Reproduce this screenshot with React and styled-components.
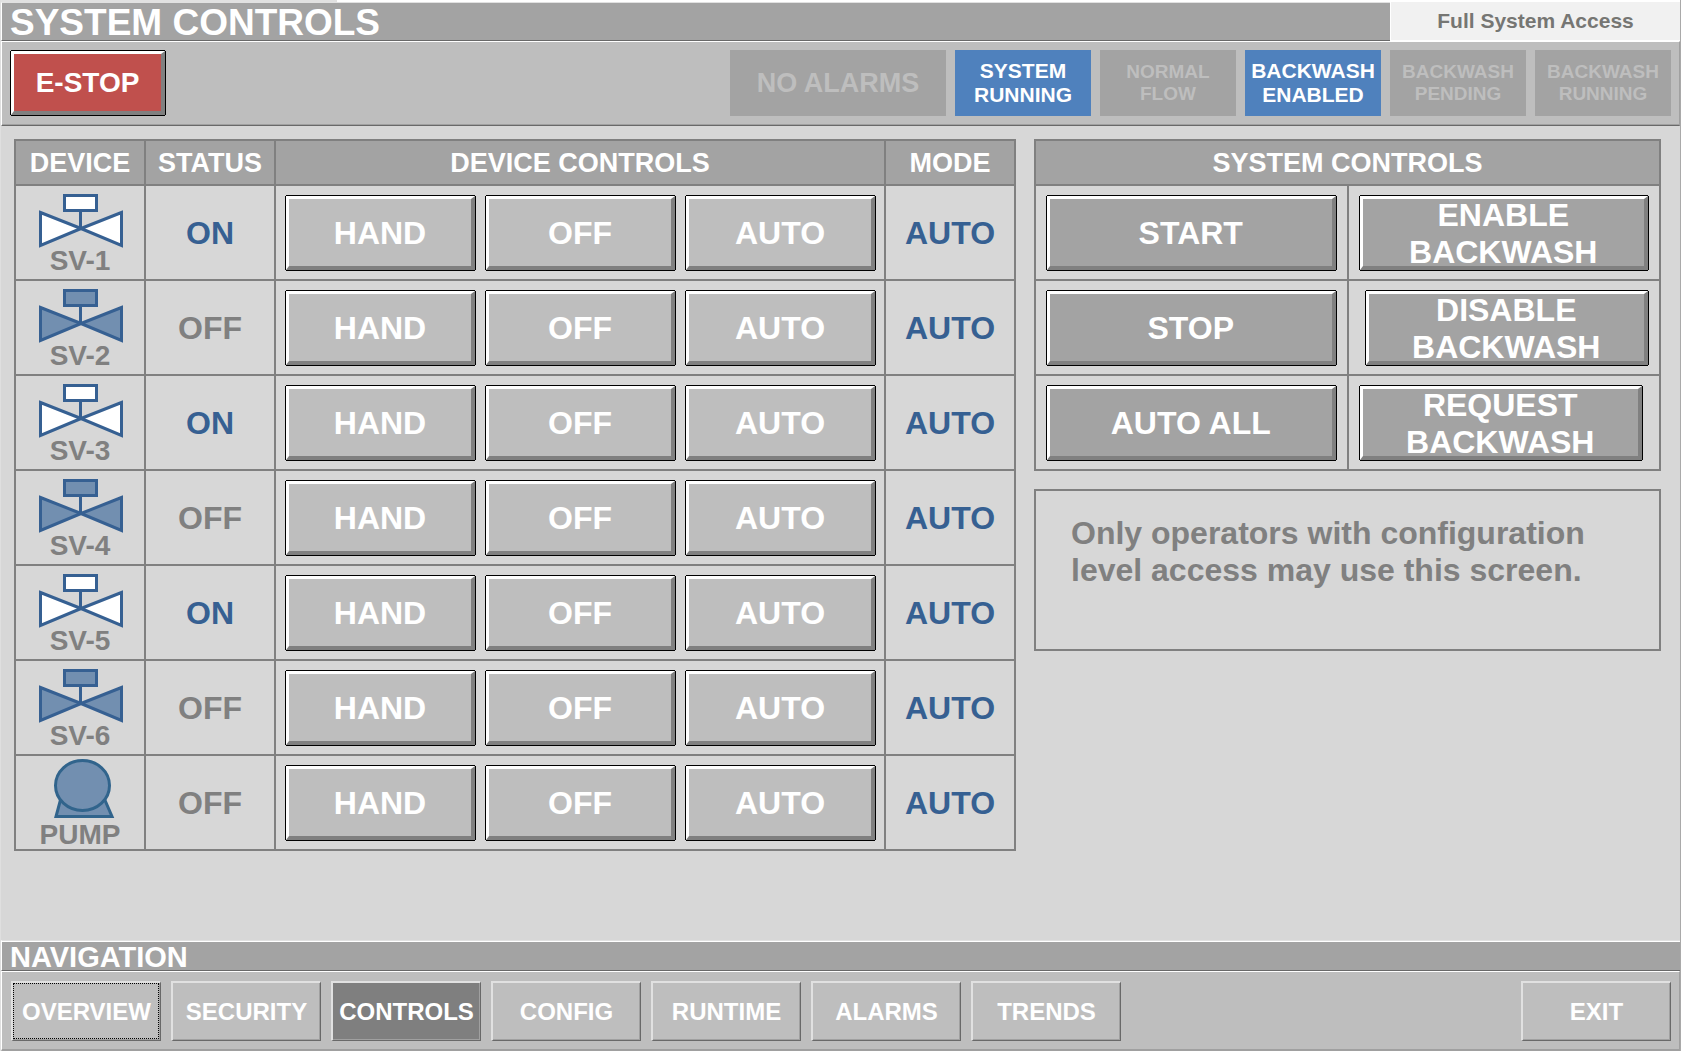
import React from 'react';
import styled, { createGlobalStyle } from 'styled-components';

const color = {
  page: '#d7d7d7',
  bar: '#bebebe',
  heading: '#a3a3a3',
  line: '#808080',
  muted: '#808080',
  shade: '#696969',
  light: '#e1e1e1',
  blueText: '#366092',
  badge: '#4f81bd',
  stop: '#c0504d',
};

const GlobalStyle = createGlobalStyle`
  *, *::before, *::after { box-sizing: border-box; }
  body {
    margin: 0;
    background: ${color.page};
    font-family: "Liberation Sans", Arial, sans-serif;
    font-weight: bold;
  }
  button { font: inherit; cursor: pointer; }
`;

const Page = styled.div`
  display: flex;
  flex-direction: column;
  min-height: 100vh;
  border-left: 1px solid #dfdfdf;
  border-right: 1px solid #a9a9a9;
`;

const TopEdge = styled.div`
  height: 2px;
  background: linear-gradient(to right, ${color.light} 20%, #fff 20%);
`;

const TitleRow = styled.header`
  display: flex;
  height: 39px;
`;

const TitleBar = styled.div`
  flex: 1;
  display: flex;
  align-items: center;
  padding: 2px 0 0 8px;
  background: ${color.heading};
  border-top: 1px solid ${color.light};
  border-left: 1px solid #fff;
  border-bottom: 1px solid ${color.shade};
`;

const Title = styled.h1`
  margin: 0;
  font-size: 37px;
  line-height: 37px;
  color: #fff;
`;

const Access = styled.div`
  flex: 0 0 290px;
  display: flex;
  align-items: center;
  justify-content: center;
  background: #f1f1f1;
  border-left: 1px solid #fff;
  border-bottom: 1px solid #fff;
  color: #767673;
  font-size: 21px;
  line-height: 24px;
`;

const StatusBar = styled.section`
  display: flex;
  justify-content: space-between;
  padding: 8px;
  background: ${color.bar};
  border: 1px solid #fff;
  border-right-color: #a0a0a0;
  border-bottom-color: ${color.shade};
  box-shadow: inset 0 -1px #a0a0a0;
  height: 85px;
`;

const BadgeList = styled.ul`
  display: flex;
  gap: 9px;
  margin: 0;
  padding: 0;
  list-style: none;
`;

const Badge = styled.li`
  display: flex;
  align-items: center;
  justify-content: center;
  text-align: center;
  width: ${(p) => (p.$wide ? 216 : 136)}px;
  height: 66px;
  background: ${(p) => (p.$active ? color.badge : color.heading)};
  color: ${(p) => (p.$active ? '#fff' : '#bebebe')};
  font-size: ${(p) => (p.$wide ? 27 : p.$active ? 21 : 19)}px;
  line-height: ${(p) => (p.$active ? 24 : 22)}px;
  white-space: pre-line;
`;

const BevelButton = styled.button`
  display: flex;
  align-items: center;
  justify-content: center;
  text-align: center;
  height: 74px;
  padding: 2px 0 0;
  color: #fff;
  background: ${(p) => (p.$tone === 'dark' ? color.heading : color.bar)};
  border: solid;
  border-width: 3px 4px 4px 3px;
  border-color: #fff ${color.line} ${color.line} #fff;
  box-shadow: 0 -1px #000, 0 1px #000, -1px 0 #000, 1px 0 #000;
  font-size: 32px;
  line-height: 37px;
  white-space: pre-line;
`;

const StopButton = styled(BevelButton)`
  width: 154px;
  height: 64px;
  margin: 1px;
  padding: 0;
  background: ${color.stop};
  font-size: 28px;
`;

const Main = styled.main`
  display: grid;
  grid-template-columns: 1002fr 627fr;
  gap: 18px;
  align-items: start;
  padding: 13px 19px 13px 13px;
`;

const SideColumn = styled.div`
  display: flex;
  flex-direction: column;
  gap: 18px;
`;

const Table = styled.table`
  width: 100%;
  table-layout: fixed;
  border-collapse: separate;
  border-spacing: 0;
  border-top: 2px solid ${color.line};
  border-left: 2px solid ${color.line};
`;

const Column = styled.col`
  width: ${(p) => p.$width};
`;

const HeadCell = styled.th`
  height: 45px;
  padding: 0;
  background: ${color.heading};
  border-right: 2px solid ${color.line};
  border-bottom: 2px solid ${color.line};
  color: #fff;
  font-size: 27px;
  line-height: 32px;
`;

const Cell = styled.td`
  height: 95px;
  padding: 0;
  border-right: 2px solid ${color.line};
  border-bottom: 2px solid ${color.line};
  text-align: center;
`;

const Reading = styled.span`
  display: block;
  padding-top: 2px;
  font-size: 32px;
  line-height: 37px;
  color: ${(p) => (p.$on ? color.blueText : color.muted)};
`;

const Device = styled.div`
  display: flex;
  flex-direction: column;
  align-items: center;
  height: 93px;
  padding-top: ${(p) => (p.$kind === 'pump' ? 3 : 8)}px;
  gap: ${(p) => (p.$kind === 'pump' ? 4 : 0)}px;
  color: ${color.muted};
  font-size: 28px;
  line-height: 26px;

  svg { display: block; flex: none; }
`;

const ButtonRow = styled.div`
  display: flex;
  gap: 11px;
  padding: 1px 9px 0 10px;

  ${BevelButton} { flex: 1; }
`;

const CommandSlot = styled.div`
  display: flex;
  padding: 1px ${(p) => (p.$inset === 'right' ? 17 : 11)}px 0 ${(p) => (p.$inset === 'left' ? 17 : 11)}px;

  ${BevelButton} { flex: 1; }
`;

const Notice = styled.p`
  margin: 0;
  min-height: 162px;
  padding: 24px 35px;
  border: 2px solid ${color.line};
  color: ${color.muted};
  font-size: 32px;
  line-height: 37px;
`;

const Footer = styled.footer`
  margin-top: auto;
`;

const NavHeading = styled.h2`
  margin: 0;
  height: 31px;
  padding-left: 8px;
  background: ${color.heading};
  border-top: 1px solid ${color.light};
  border-left: 1px solid #fff;
  border-bottom: 1px solid ${color.shade};
  box-shadow: inset 0 1px #fff;
  color: #fff;
  font-size: 29px;
  line-height: 32px;
`;

const NavBar = styled.nav`
  display: flex;
  gap: 10px;
  height: 80px;
  padding: 9px 8px 8px 9px;
  background: ${color.bar};
  border: 1px solid #fff;
  border-right-color: #a0a0a0;
  border-bottom: 2px solid #a0a0a0;
`;

const NavButton = styled.button`
  width: 150px;
  height: 60px;
  padding: 0;
  color: #fff;
  background: ${(p) => (p.$current ? '#7f7f7f' : color.bar)};
  border: solid;
  border-width: 2px 1px 1px 2px;
  border-color: ${color.light} ${color.shade} ${color.shade} ${color.light};
  box-shadow: inset -1px -1px #a0a0a0;
  font-size: 24px;
  line-height: 28px;
  outline: ${(p) => (p.$focused ? '1px dotted #000' : 'none')};
  outline-offset: -3px;
  margin-left: ${(p) => (p.$end ? 'auto' : '0')};
`;

function ValveIcon({ open }) {
  return (
    <svg width="86" height="54" viewBox="0 0 86 54" aria-hidden="true"
      fill={open ? '#fff' : '#728fb0'} stroke="#366092" strokeWidth="3">
      <path d="M43.5 17V34" />
      <path d="M3.5 18.5L44 34.5L3.5 51.5Z" strokeMiterlimit="2" />
      <path d="M84.5 18.5L44 34.5L84.5 51.5Z" strokeMiterlimit="2" />
      <rect x="27.5" y="1.5" width="32" height="15" />
    </svg>
  );
}

function PumpIcon() {
  return (
    <svg width="84" height="59" viewBox="0 0 84 59" aria-hidden="true"
      fill="#728fb0" stroke="#31648c" strokeWidth="3">
      <path d="M23 39L18 57.5H74L66 39Z" />
      <ellipse cx="44.5" cy="26.5" rx="27" ry="25" />
    </svg>
  );
}

const badges = [
  { text: 'NO ALARMS', wide: true },
  { text: 'SYSTEM\nRUNNING', active: true },
  { text: 'NORMAL\nFLOW' },
  { text: 'BACKWASH\nENABLED', active: true },
  { text: 'BACKWASH\nPENDING' },
  { text: 'BACKWASH\nRUNNING' },
];

const devices = [
  { name: 'SV-1', kind: 'valve', on: true },
  { name: 'SV-2', kind: 'valve', on: false },
  { name: 'SV-3', kind: 'valve', on: true },
  { name: 'SV-4', kind: 'valve', on: false },
  { name: 'SV-5', kind: 'valve', on: true },
  { name: 'SV-6', kind: 'valve', on: false },
  { name: 'PUMP', kind: 'pump', on: false },
];

const commands = [
  [{ text: 'START' }, { text: 'ENABLE\nBACKWASH' }],
  [{ text: 'STOP' }, { text: 'DISABLE\nBACKWASH', inset: 'left' }],
  [{ text: 'AUTO ALL' }, { text: 'REQUEST\nBACKWASH', inset: 'right' }],
];

const screens = ['OVERVIEW', 'SECURITY', 'CONTROLS', 'CONFIG', 'RUNTIME', 'ALARMS', 'TRENDS'];

function DeviceTable() {
  return (
    <Table>
      <colgroup>
        <Column $width="130px" />
        <Column $width="130px" />
        <Column $width="auto" />
        <Column $width="130px" />
      </colgroup>
      <thead>
        <tr>
          <HeadCell scope="col">DEVICE</HeadCell>
          <HeadCell scope="col">STATUS</HeadCell>
          <HeadCell scope="col">DEVICE CONTROLS</HeadCell>
          <HeadCell scope="col">MODE</HeadCell>
        </tr>
      </thead>
      <tbody>
        {devices.map((d) => (
          <tr key={d.name}>
            <Cell>
              <Device $kind={d.kind}>
                {d.kind === 'pump' ? <PumpIcon /> : <ValveIcon open={d.on} />}
                <span>{d.name}</span>
              </Device>
            </Cell>
            <Cell><Reading $on={d.on}>{d.on ? 'ON' : 'OFF'}</Reading></Cell>
            <Cell>
              <ButtonRow>
                {['HAND', 'OFF', 'AUTO'].map((mode) => (
                  <BevelButton key={mode} type="button">{mode}</BevelButton>
                ))}
              </ButtonRow>
            </Cell>
            <Cell><Reading $on>AUTO</Reading></Cell>
          </tr>
        ))}
      </tbody>
    </Table>
  );
}

function CommandTable() {
  return (
    <Table>
      <thead>
        <tr><HeadCell colSpan={2} scope="colgroup">SYSTEM CONTROLS</HeadCell></tr>
      </thead>
      <tbody>
        {commands.map((row) => (
          <tr key={row[0].text}>
            {row.map((c) => (
              <Cell key={c.text}>
                <CommandSlot $inset={c.inset}>
                  <BevelButton type="button" $tone="dark">{c.text}</BevelButton>
                </CommandSlot>
              </Cell>
            ))}
          </tr>
        ))}
      </tbody>
    </Table>
  );
}

export default function App() {
  return (
    <>
      <GlobalStyle />
      <Page>
        <TopEdge />
        <TitleRow>
          <TitleBar><Title>SYSTEM CONTROLS</Title></TitleBar>
          <Access>Full System Access</Access>
        </TitleRow>
        <StatusBar>
          <StopButton type="button">E-STOP</StopButton>
          <BadgeList>
            {badges.map((b) => (
              <Badge key={b.text} $wide={b.wide} $active={b.active}>{b.text}</Badge>
            ))}
          </BadgeList>
        </StatusBar>
        <Main>
          <DeviceTable />
          <SideColumn>
            <CommandTable />
            <Notice>Only operators with configuration level access may use this screen.</Notice>
          </SideColumn>
        </Main>
        <Footer>
          <NavHeading>NAVIGATION</NavHeading>
          <NavBar>
            {screens.map((s) => (
              <NavButton key={s} type="button" $current={s === 'CONTROLS'} $focused={s === 'OVERVIEW'}>
                {s}
              </NavButton>
            ))}
            <NavButton type="button" $end>EXIT</NavButton>
          </NavBar>
        </Footer>
      </Page>
    </>
  );
}
